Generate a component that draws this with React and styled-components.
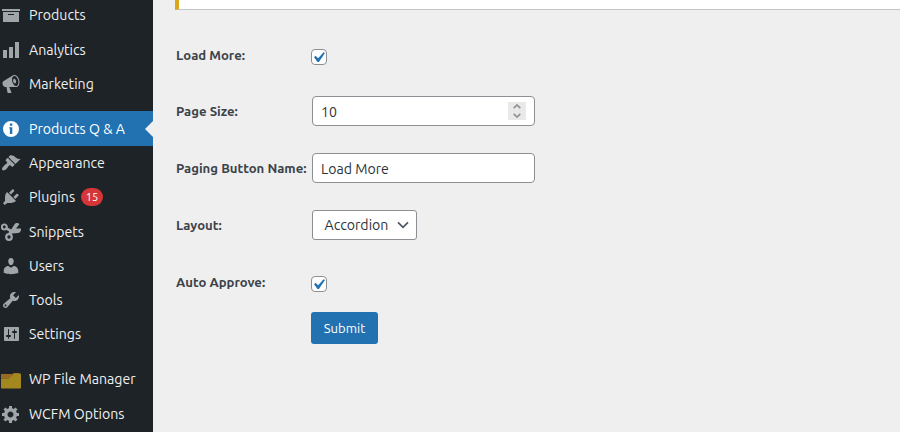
import React, { useState } from 'react'
import styled, { createGlobalStyle } from 'styled-components';

const GlobalStyle=createGlobalStyle`
*{ box-sizing: border-box; }
body{
  margin:0;
  overflow:hidden;
  background:#efefef;
  font-family:"Ubuntu","Noto Sans",sans-serif;
}
`
const Page=styled.div`
display:flex;
height:432px;
overflow:hidden;
background:#efefef;
`
const Sidebar=styled.nav`
width:153px;
flex:none;
margin-top:-1.7px;
background:#1d2327;
`
const MenuGroup=styled.div`
display:flex;
flex-direction:column;
margin-bottom:${p=>p.$gap}px;
`
const MenuItem=styled.a`
position:relative;
display:flex;
align-items:center;
height:${p=>p.$active ? "35px" : "34.2px"};
padding-left:1px;
gap:8px;
font-size:14.15px;
white-space:nowrap;
color:${p=>p.$active ? "#fff" : "#f0f0f1"};
background:${p=>p.$active ? "#2271b1" : "transparent"};
cursor:pointer;
`
const Label=styled.span`
line-height:20px;
`
const Pointer=styled.span`
position:absolute;
right:0;
top:10px;
border:8px solid transparent;
border-left-width:0;
border-right-color:#efefef;
`
const Badge=styled.span`
margin-left:-2px;
width:22px;
height:18px;
border-radius:9px;
background:#d63638;
color:#fff;
font-size:11px;
line-height:18px;
text-align:center;
`
const Icon=styled.svg`
width:20px;
height:20px;
flex:none;
fill:${p=>p.$active ? "#fff" : "#a0a5aa"};
`
const Main=styled.main`
flex:1;
padding-left:22px;
`
const Notice=styled.div`
height:10px;
background:#fff;
border-left:4px solid #dba617;
border-bottom:1px solid #c3c4c7;
`
const Form=styled.form`
padding:21px 0 0 1px;
`
const Row=styled.div`
display:grid;
grid-template-columns:136px auto;
align-items:center;
justify-content:start;
height:${p=>p.$height || 57}px;
`
const FieldName=styled.label`
font-size:13.15px;
font-weight:700;
line-height:20px;
white-space:nowrap;
color:#3c434a;
margin-top:${p=>p.$lift ? "-3px" : 0};
`
const Check=styled.button`
width:16px;
height:16px;
margin-left:-1px;
padding:0;
display:flex;
border:1px solid #8c8f94;
border-radius:4px;
background:#fff;
svg{ width:21px; height:21px; margin:-3px 0 0 -4px; flex:none; fill:#2271b1; }
`
const Field=styled.div`
display:flex;
align-items:center;
width:${p=>p.$width || 223}px;
height:30px;
padding:0 8px;
border:1px solid #8c8f94;
border-radius:4px;
background:#fff;
`
const Input=styled.input`
flex:1;
min-width:0;
padding:2px 0 0;
border:0;
outline:0;
background:transparent;
font:14.1px "Ubuntu","Noto Sans",sans-serif;
color:#2c3338;
`
const Spinner=styled.span`
display:flex;
flex-direction:column;
align-items:center;
justify-content:center;
gap:4px;
width:18px;
height:18px;
background:#e9e9ea;
svg{ width:8px; height:5px; fill:none; stroke:#8f9296; stroke-width:1.7; }
`
const Select=styled(Field)`
justify-content:space-between;
border-radius:3px;
padding:0 7px 0 11.5px;
font-size:14.15px;
color:#2c3338;
svg{ width:12px; height:8px; fill:none; stroke:#50575e; stroke-width:1.7; }
`
const Submit=styled.button`
display:block;
width:67px;
height:32px;
margin:-2px 0 0 135px;
padding:0;
border:0;
border-radius:3px;
background:#2271b1;
color:#fff;
font:13.1px "Ubuntu","Noto Sans",sans-serif;
`

const paths={
    archive:"M19 4v2H1V4h18zM2 7h16v10H2V7zm11 3V9H7v1h6z",
    chart:"M18 18V2h-4v16h4zm-6 0V7H8v11h4zm-6 0v-8H2v8h4z",
    megaphone:"M18.15 5.94c.46 1.62.38 3.22-.02 4.48-.42 1.28-1.26 2.18-2.3 2.48-.16.06-.26.06-.4.06-.06.02-.12.02-.18.02-.06.02-.14.02-.22.02h-6.8l2.22 5.5c.02.14-.06.26-.14.34-.08.1-.24.16-.34.16H6.95c-.1 0-.26-.06-.34-.16-.08-.08-.16-.2-.14-.34l-1-5.5H4.25l-.02-.02c-.5.06-1.08-.18-1.54-.62s-.88-1.08-1.06-1.88c-.24-.8-.2-1.56-.02-2.2.18-.62.58-1.08 1.06-1.3l.02-.02 9-5.4c.1-.06.18-.1.24-.16.06-.04.14-.08.24-.12.16-.08.28-.12.5-.18 1.04-.3 2.24.1 3.22.98s1.84 2.24 2.26 3.86zm-2.58 5.98h-.02c.4-.1.74-.34 1.04-.7.58-.7.86-1.76.86-3.04 0-.64-.1-1.3-.28-1.98-.34-1.36-1.02-2.5-1.78-3.24s-1.68-1.1-2.46-.88c-.82.22-1.4.96-1.7 2-.32 1.04-.28 2.36.06 3.72.38 1.36 1 2.5 1.8 3.24.78.74 1.62 1.1 2.48.88zm-2.54-7.08c.22-.04.42-.02.62.04.38.16.76.48 1.02 1s.42 1.2.42 1.78c0 .3-.04.56-.12.8-.18.48-.44.84-.86.94-.34.1-.8-.06-1.14-.4s-.64-.86-.78-1.5c-.18-.62-.12-1.24.02-1.72s.48-.84.82-.94z",
    info:"M10 2a8 8 0 1 0 0 16 8 8 0 0 0 0-16zM8.9 4.6h2.4v2.2H8.9zM8.3 8.2h3V15H8.9V9.4H8.3z",
    brush:"M14.48 11.06L7.41 3.99l1.5-1.5c.5-.56 2.3-.47 3.51.32 1.21.8 1.43 1.28 2.91 2.1 1.18.64 2.45 1.26 4.45.85zm-.71.71L6.7 4.7 4.93 6.47c-.39.39-.39 1.02 0 1.41l1.06 1.06c.39.39.39 1.03 0 1.42-.6.6-1.43 1.11-2.21 1.69-.35.26-.7.53-1.01.84C1.43 14.23.4 16.08 1.4 17.07c.99 1 2.84-.03 4.18-1.36.31-.31.58-.66.85-1.02.57-.78 1.08-1.61 1.69-2.21.39-.39 1.02-.39 1.41 0l1.06 1.06c.39.39 1.02.39 1.41 0z",
    plug:"M13.11 4.36L9.87 7.6 8 5.73l3.24-3.24c.35-.34 1.05-.2 1.56.32.52.51.66 1.21.31 1.55zm-8 1.77l.91-1.12 9.01 9.01-1.19.84c-.71.71-2.63 1.16-3.82 1.16H6.14L4.9 17.26c-.59.59-1.54.59-2.12 0-.59-.58-.59-1.53 0-2.12l1.24-1.24v-3.88c0-1.13.4-3.19 1.09-3.89zm7.26 3.97l3.24-3.24c.34-.35 1.04-.21 1.55.31.52.51.66 1.21.31 1.55l-3.24 3.25z",
    user:"M10 9.25c-2.27 0-2.73-3.44-2.73-3.44C7 4.02 7.82 2 9.97 2c2.16 0 2.98 2.02 2.71 3.81 0 0-.41 3.44-2.68 3.44zm0 2.57L12.72 10c2.39 0 4.52 2.33 4.52 4.53v2.49s-3.65 1.13-7.24 1.13c-3.65 0-7.24-1.13-7.24-1.13v-2.49c0-2.25 1.94-4.48 4.47-4.48z",
    wrench:"M16.68 9.77c-1.34 1.34-3.3 1.67-4.95.99l-5.41 6.52c-.99.99-2.59.99-3.58 0s-.99-2.59 0-3.57l6.52-5.42c-.68-1.65-.35-3.61.99-4.95 1.28-1.28 3.12-1.62 4.72-1.06l-2.89 2.89 2.82 2.82 2.86-2.87c.53 1.58.18 3.39-1.08 4.65zM3.81 16.21c.4.39 1.04.39 1.43 0 .4-.4.4-1.04 0-1.43-.39-.4-1.03-.4-1.43 0-.39.39-.39 1.03 0 1.43z",
    sliders:"M18 16V4c0-.55-.45-1-1-1H4c-.55 0-1 .45-1 1v12c0 .55.45 1 1 1h13c.55 0 1-.45 1-1zM8 11h1c.55 0 1 .45 1 1s-.45 1-1 1H8v1.5c0 .28-.22.5-.5.5s-.5-.22-.5-.5V13H6c-.55 0-1-.45-1-1s.45-1 1-1h1V5.5c0-.28.22-.5.5-.5s.5.22.5.5V11zm5-2h-1c-.55 0-1-.45-1-1s.45-1 1-1h1V5.5c0-.28.22-.5.5-.5s.5.22.5.5V7h1c.55 0 1 .45 1 1s-.45 1-1 1h-1v5.5c0 .28-.22.5-.5.5s-.5-.22-.5-.5V9z",
    gear:"M18 12h-2.18c-.17.7-.44 1.35-.81 1.93l1.54 1.54-2.1 2.1-1.54-1.54c-.58.36-1.23.63-1.91.79V19H8v-2.18c-.68-.16-1.33-.43-1.91-.79l-1.54 1.54-2.12-2.12 1.54-1.54c-.36-.58-.63-1.23-.79-1.91H1V9.03h2.17c.16-.7.44-1.35.8-1.94L2.43 5.55l2.1-2.1 1.54 1.54c.58-.37 1.24-.64 1.93-.81V2h3v2.18c.68.16 1.33.43 1.91.79l1.54-1.54 2.12 2.12-1.54 1.54c.36.59.64 1.24.8 1.94H18V12zm-8.5 1.5c1.66 0 3-1.34 3-3s-1.34-3-3-3-3 1.34-3 3 1.34 3 3 3z"
}

const Scissors=()=>(
    <Icon viewBox="0 0 20 20">
        <g fill="none" stroke="#a0a5aa" strokeWidth="2.2">
            <circle cx="3.3" cy="5" r="2.5" />
            <circle cx="8" cy="15" r="2.8" />
        </g>
        <path d="M4.6 7.6L6.4 5.6l3.8 1.8 3.2-5C14.4 1.2 16 .6 17.6 1.4l.8.8L15 6.6h5c.2 2.6-1 4.3-3 4.4l-5.8.4-1.8 2.2-2.3-1.5 1-2.5z" />
    </Icon>
)

const Folder=()=>(
    <Icon viewBox="0 0 20 20">
        <path fill="#9a6a24" d="M0 6c0-.7.4-1 1-1h10l2-1h5v5H0z" />
        <path fill="#a38820" d="M0 9.3h8l3-2.3 2.5-2.5H19c.6 0 1 .4 1 1v13c0 .7-.4 1-1 1H1c-.6 0-1-.3-1-1z" />
    </Icon>
)

const groups=[
    { gap:10.2, items:[
        { name:"Products", icon:"archive" },
        { name:"Analytics", icon:"chart" },
        { name:"Marketing", icon:"megaphone" }
    ]},
    { gap:11.15, items:[
        { name:"Products Q & A", icon:"info", active:true },
        { name:"Appearance", icon:"brush" },
        { name:"Plugins", icon:"plug", count:15 },
        { name:"Snippets", icon:"scissors" },
        { name:"Users", icon:"user" },
        { name:"Tools", icon:"wrench" },
        { name:"Settings", icon:"sliders" }
    ]},
    { gap:0, items:[
        { name:"WP File Manager", icon:"folder" },
        { name:"WCFM Options", icon:"gear" }
    ]}
]

const MenuIcon=({ name, active })=>{
    if(name==="scissors") return <Scissors />
    if(name==="folder") return <Folder />
    return (
        <Icon viewBox="0 0 20 20" $active={active}>
            <path fillRule="evenodd" d={paths[name]} />
        </Icon>
    )
}

const Checkbox=({ label })=>{
    const [on,setOn]=useState(true);
    return (
        <Check type="button" role="checkbox" aria-checked={on} aria-label={label} onClick={()=>setOn(!on)}>
            {on && <svg viewBox="0 0 20 20"><path d="M14.83 4.89l1.34.94-5.81 8.38H9.02L5.78 9.67l1.34-1.25 2.57 2.4z" /></svg>}
        </Check>
    )
}

const App=()=>{
    return (
        <>
            <GlobalStyle />
            <Page>
                <Sidebar>
                    {groups.map((group,i)=>(
                        <MenuGroup key={i} $gap={group.gap}>
                            {group.items.map(item=>(
                                <MenuItem key={item.name} $active={item.active}>
                                    <MenuIcon name={item.icon} active={item.active} />
                                    <Label>{item.name}</Label>
                                    {item.count && <Badge>{item.count}</Badge>}
                                    {item.active && <Pointer />}
                                </MenuItem>
                            ))}
                        </MenuGroup>
                    ))}
                </Sidebar>
                <Main>
                    <Notice />
                    <Form onSubmit={e=>e.preventDefault()}>
                        <Row $height={51}>
                            <FieldName $lift>Load More:</FieldName>
                            <Checkbox label="Load More" />
                        </Row>
                        <Row>
                            <FieldName>Page Size:</FieldName>
                            <Field>
                                <Input defaultValue="10" />
                                <Spinner>
                                    <svg viewBox="0 0 8 5"><path d="M.7 4.2L4 1l3.3 3.2" /></svg>
                                    <svg viewBox="0 0 8 5"><path d="M.7.8L4 4 7.3.8" /></svg>
                                </Spinner>
                            </Field>
                        </Row>
                        <Row>
                            <FieldName>Paging Button Name:</FieldName>
                            <Field>
                                <Input defaultValue="Load More" />
                            </Field>
                        </Row>
                        <Row>
                            <FieldName>Layout:</FieldName>
                            <Select $width={105}>
                                <Label>Accordion</Label>
                                <svg viewBox="0 0 12 8"><path d="M1 1.3l5 5 5-5" /></svg>
                            </Select>
                        </Row>
                        <Row $height={61}>
                            <FieldName $lift>Auto Approve:</FieldName>
                            <Checkbox label="Auto Approve" />
                        </Row>
                        <Submit>Submit</Submit>
                    </Form>
                </Main>
            </Page>
        </>
    )
}

export default App;
